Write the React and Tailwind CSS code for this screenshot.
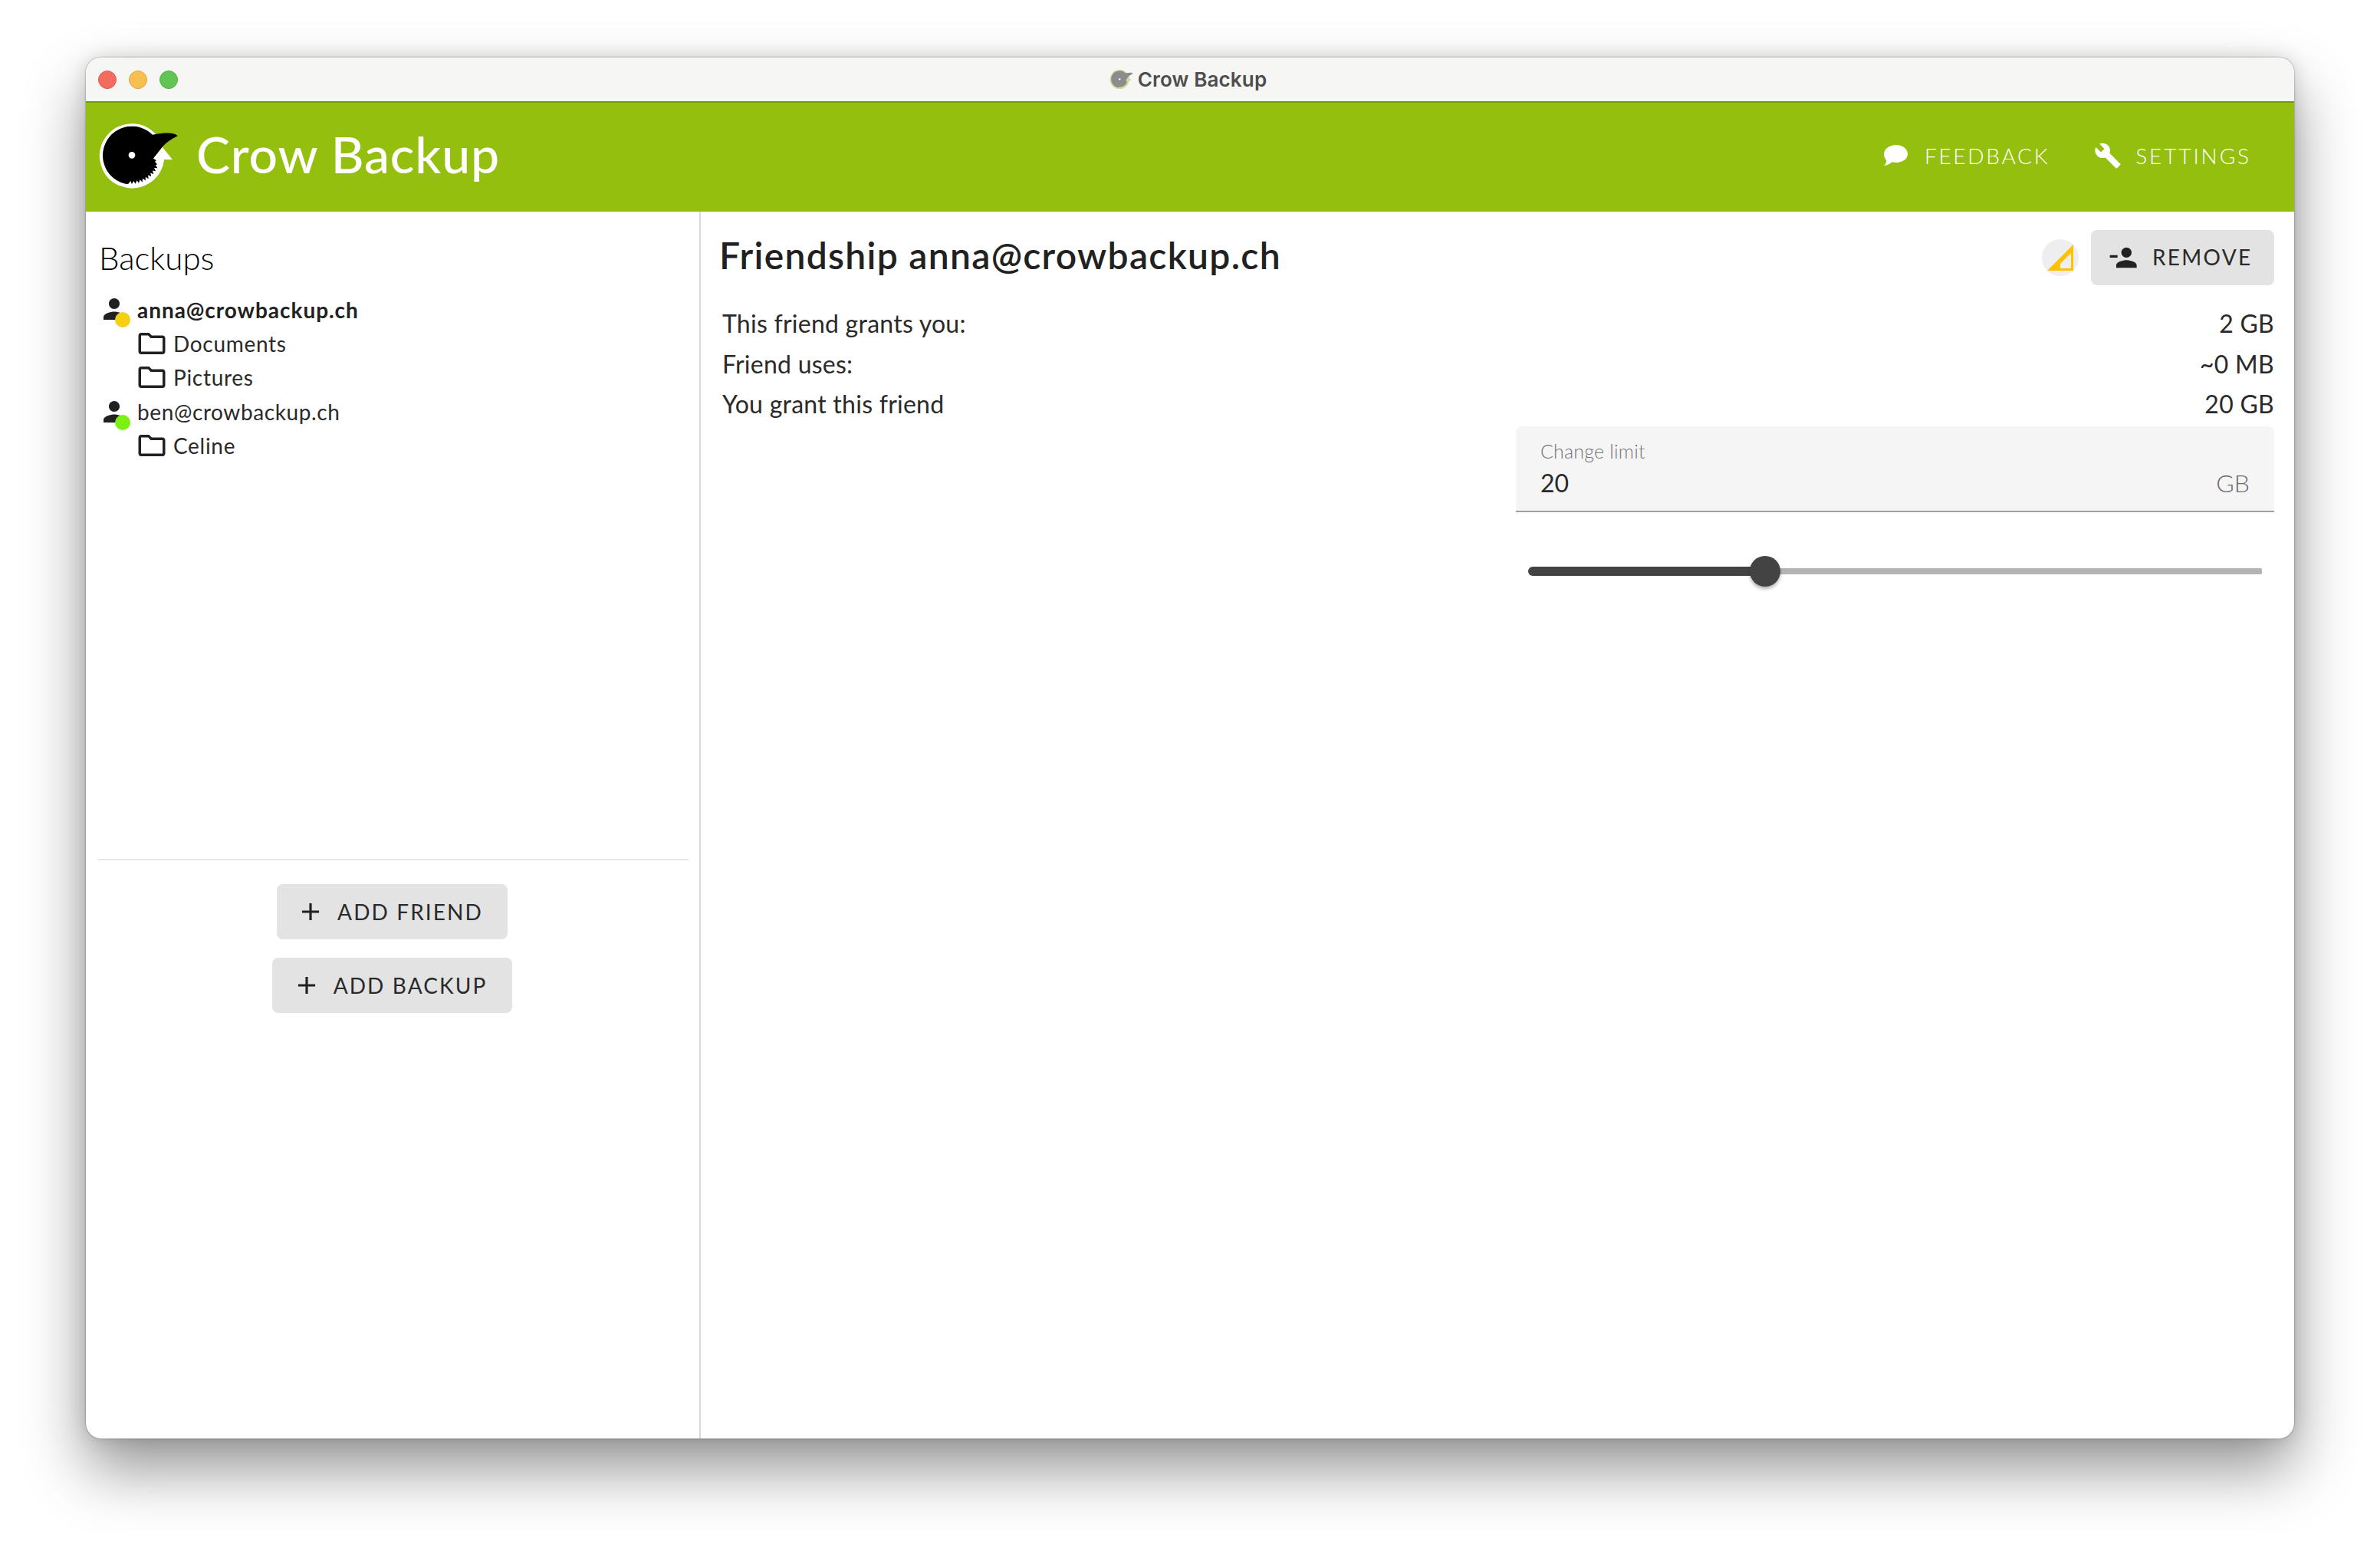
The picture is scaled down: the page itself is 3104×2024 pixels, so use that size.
const teeth = (() => {
  const pts = [];
  const n = 13;
  for (let i = 0; i < n; i++) {
    const a0 = (8 + (i * 92) / n) * (Math.PI / 180);
    const a1 = (8 + ((i + 0.6) * 92) / n) * (Math.PI / 180);
    const rIn = 86 + Math.min(i, 2) * 7;
    const rOut = rIn + 12;
    pts.push(`${(156 + rIn * Math.cos(a0)).toFixed(1)} ${(158 + rIn * Math.sin(a0)).toFixed(1)}`);
    pts.push(`${(156 + rOut * Math.cos(a1)).toFixed(1)} ${(158 + rOut * Math.sin(a1)).toFixed(1)}`);
  }
  return pts.reverse().join(" L");
})();

function Logo({ className, ring, disc, eye, ringWidth = 14 }) {
  return (
    <svg viewBox="0 0 360 330" className={className}>
      <path d="M244.400 80.400 A119 119 0 1 0 274 175" fill="none" stroke={ring} strokeWidth={ringWidth} />
      <path d="M237 173 L282 173 A126 126 0 0 1 136 284 L136 200 Z" fill={ring} />
      <path d="M237 173 L275 125 L315 175 Z" fill={ring} />
      <path
        d={`M236.600 77.400 A114 114 0 1 0 136.200 270.300 L${teeth} L237 173 L276 124 C292 106 312 94 335 82 C328 70 290 66 245 76 Z`}
        fill={disc}
      />
      <circle cx="156" cy="157" r="13" fill={eye} />
    </svg>
  );
}

function Person({ dot }) {
  return (
    <div className="relative w-[42px] h-[42px] shrink-0 -ml-[3px]">
      <svg viewBox="0 0 24 24" className="w-[42px] h-[42px]" fill="#212121">
        <path d="M12 12c2.21 0 4-1.79 4-4s-1.79-4-4-4-4 1.79-4 4 1.79 4 4 4zm0 2c-2.67 0-8 1.34-8 4v2h16v-2c0-2.66-5.33-4-8-4z" />
      </svg>
      <span className={`absolute left-[22px] top-[25px] w-[20px] h-[20px] rounded-full ${dot}`} />
    </div>
  );
}

function Folder({ label }) {
  return (
    <div className="flex items-center h-[44.5px] pl-[46px]">
      <svg viewBox="0 0 24 24" className="w-[42px] h-[42px] shrink-0" fill="#212121">
        <path d="M9.17 6l2 2H20v10H4V6h5.17M10 4H4c-1.1 0-1.99.9-1.99 2L2 18c0 1.1.9 2 2 2h16c1.1 0 2-.9 2-2V8c0-1.1-.9-2-2-2h-8l-2-2z" />
      </svg>
      <span className="ml-[7px] text-[28px] font-normal tracking-[0.7px] text-[#2a2a2a]">{label}</span>
    </div>
  );
}

function Plus() {
  return (
    <svg viewBox="0 0 24 24" className="w-[38px] h-[38px] shrink-0" fill="#212121">
      <path d="M19 13h-6v6h-2v-6H5v-2h6V5h2v6h6v2z" />
    </svg>
  );
}

function AddButton({ label, width }) {
  return (
    <button className={`flex items-center justify-center h-[72px] pr-[6px] rounded-[8px] bg-[#e3e3e3] ${width}`}>
      <Plus />
      <span className="ml-[16px] text-[28px] font-normal tracking-[2.1px] text-[#2a2a2a]">{label}</span>
    </button>
  );
}

function Row({ left, right }) {
  return (
    <div className="flex justify-between items-center h-[52.5px] pl-[4px] text-[32px] font-normal tracking-[0.25px] text-[#2a2a2a]">
      <span>{left}</span>
      <span>{right}</span>
    </div>
  );
}

export default function App() {
  return (
    <div className="w-[3104px] h-[2024px] bg-white pt-[75px] pl-[112px] overflow-hidden font-['Lato','Liberation_Sans',sans-serif]">
      <div className="w-[2880px] h-[1801px] flex flex-col rounded-[20px] overflow-hidden bg-white shadow-[0_40px_80px_rgba(0,0,0,0.42),0_0_24px_rgba(0,0,0,0.14),0_0_2px_rgba(0,0,0,0.55)]">
        {/* Title bar */}
        <div className="relative h-[57px] shrink-0 bg-[#f6f6f4] flex items-center justify-center">
          <div className="absolute left-[16px] top-[17px] flex gap-[16px]">
            <span className="w-[24px] h-[24px] rounded-full bg-[#f26d60] border border-[#dc5a4e]" />
            <span className="w-[24px] h-[24px] rounded-full bg-[#f6c050] border border-[#dfa63e]" />
            <span className="w-[24px] h-[24px] rounded-full bg-[#61c554] border border-[#52ad45]" />
          </div>
          <div className="flex items-center -ml-[7px]">
            <Logo className="w-[35px] h-[32px]" ring="#cbd99a" disc="#8c8c8c" eye="#f0f0f0" ringWidth={20} />
            <span className="ml-[4px] text-[26px] font-semibold tracking-[0.15px] text-[#4d4d4d] font-['Inter','Liberation_Sans',sans-serif]">
              Crow Backup
            </span>
          </div>
        </div>

        {/* Header */}
        <header className="h-[144px] shrink-0 bg-[#94bf0f] border-t-2 border-[#6f9c00] flex items-center pl-[8px] pr-[56px]">
          <Logo className="w-[120px] h-[110px] shrink-0" ring="#ffffff" disc="#000000" eye="#ffffff" />
          <h1 className="ml-[16px] -mt-[8px] text-[66px] font-medium text-white leading-none tracking-[0.9px]">Crow Backup</h1>
          <div className="ml-auto flex items-center -mt-[5px]">
            <svg viewBox="0 0 31 27" className="w-[31px] h-[27px]" fill="#ffffff">
              <path d="M16 0C24.5 0 31 5.300 31 11.800 31 18.300 24.500 23 16 23c-2 0-3.800-.2-5.500-.8C8 24.500 4.500 26.500 0 27c2-1.600 3.200-4 3.400-6.800C1.200 18 0 15.100 0 11.800 0 5.300 7.500 0 16 0z" />
            </svg>
            <span className="ml-[22px] text-[28px] font-light tracking-[2.7px] text-white">FEEDBACK</span>
            <svg viewBox="0 0 24 24" className="ml-[58px] w-[36px] h-[36px]" fill="#ffffff">
              <path d="M22.7 19l-9.100-9.100c.9-2.300.4-5-1.500-6.900-2-2-5-2.400-7.400-1.300L9 6 6 9 1.600 4.700C.4 7.100.9 10.100 2.900 12.100c1.900 1.900 4.600 2.400 6.900 1.500l9.100 9.100c.4.4 1 .4 1.400 0l2.300-2.300c.5-.4.5-1.100.1-1.400z" />
            </svg>
            <span className="ml-[18px] text-[28px] font-light tracking-[2.9px] text-white">SETTINGS</span>
          </div>
        </header>

        {/* Body */}
        <div className="flex-1 flex min-h-0">
          <aside className="w-[802px] shrink-0 border-r-2 border-[#d9d9d9] flex flex-col pl-[16px] pr-[14px]">
            <div className="h-[846px] shrink-0 border-b-2 border-[#e5e5e5] pt-[34px] pl-[1px]">
              <h2 className="text-[42px] leading-[52px] font-light text-black">Backups</h2>
              <div className="mt-[19px] pl-[2px]">
                <div className="flex items-center h-[44.5px]">
                  <Person dot="bg-[#f5cf10]" />
                  <span className="ml-[9px] mt-[1px] text-[28px] font-bold tracking-[0.95px] text-[#212121]">anna@crowbackup.ch</span>
                </div>
                <Folder label="Documents" />
                <Folder label="Pictures" />
                <div className="flex items-center h-[44.5px]">
                  <Person dot="bg-[#7cf111]" />
                  <span className="ml-[9px] text-[28px] font-normal tracking-[0.6px] text-[#2a2a2a]">ben@crowbackup.ch</span>
                </div>
                <Folder label="Celine" />
              </div>
            </div>
            <div className="flex flex-col items-center pt-[31px] gap-[24px] mr-[4px]">
              <AddButton label="ADD FRIEND" width="w-[301px]" />
              <AddButton label="ADD BACKUP" width="w-[313px]" />
            </div>
          </aside>

          <main className="flex-1 min-w-0 pl-[24px] pr-[26px] pt-[24px]">
            <div className="flex items-center justify-between h-[72px]">
              <h2 className="text-[48px] font-semibold text-[#212121] tracking-[1.3px] leading-none -mt-[6px]">
                Friendship anna@crowbackup.ch
              </h2>
              <div className="flex items-center gap-[16px]">
                <div className="w-[48px] h-[48px] rounded-full bg-[#eeeeee] flex items-center justify-center">
                  <svg viewBox="0 0 34 34" className="w-[34px] h-[34px]">
                    <path d="M0 34 L34 0 L34 34 Z" fill="#ffc107" />
                    <path d="M17 31 L31 31 L31 11 L17 25 Z" fill="#eeeeee" />
                  </svg>
                </div>
                <button className="w-[239px] h-[72px] rounded-[8px] bg-[#e3e3e3] flex items-center pl-[23px]">
                  <svg viewBox="0 0 24 24" className="w-[40px] h-[40px] -scale-x-100" fill="#212121">
                    <path d="M14 8c0-2.210-1.790-4-4-4S6 5.790 6 8s1.790 4 4 4 4-1.790 4-4zm3 2v2h6v-2h-6zM2 18v2h16v-2c0-2.660-5.330-4-8-4s-8 1.340-8 4z" />
                  </svg>
                  <span className="ml-[17px] -mt-[3px] text-[28px] font-normal tracking-[2.3px] text-[#2a2a2a]">REMOVE</span>
                </button>
              </div>
            </div>
            <div className="mt-[24px]">
              <Row left="This friend grants you:" right="2 GB" />
              <Row left="Friend uses:" right="~0 MB" />
              <Row left="You grant this friend" right="20 GB" />
            </div>
            <div className="ml-auto w-[989px] mt-[2px]">
              <div className="h-[112px] rounded-t-[8px] bg-[#f5f5f5] border-b-2 border-[#a0a0a0] px-[32px] pt-[16px]">
                <div className="text-[25px] leading-[32px] font-light tracking-[0.2px] text-[#757575]">Change limit</div>
                <div className="flex justify-between items-center mt-[6px] leading-[40px]">
                  <span className="text-[32px] font-normal text-[#2a2a2a]">20</span>
                  <span className="text-[32px] font-light text-[#6b6b6b]">GB</span>
                </div>
              </div>
              <div className="relative mx-[16px] mt-[57px] h-[40px] flex items-center">
                <div className="w-[309px] h-[12px] rounded-l-full bg-[#434343]" />
                <div className="flex-1 h-[8px] rounded-r-[2px] bg-[#b4b4b4]" />
                <span className="absolute left-[289px] top-0 w-[40px] h-[40px] rounded-full bg-[#434343] shadow-[0_3px_4px_rgba(0,0,0,0.3)]" />
              </div>
            </div>
          </main>
        </div>
      </div>
    </div>
  );
}
